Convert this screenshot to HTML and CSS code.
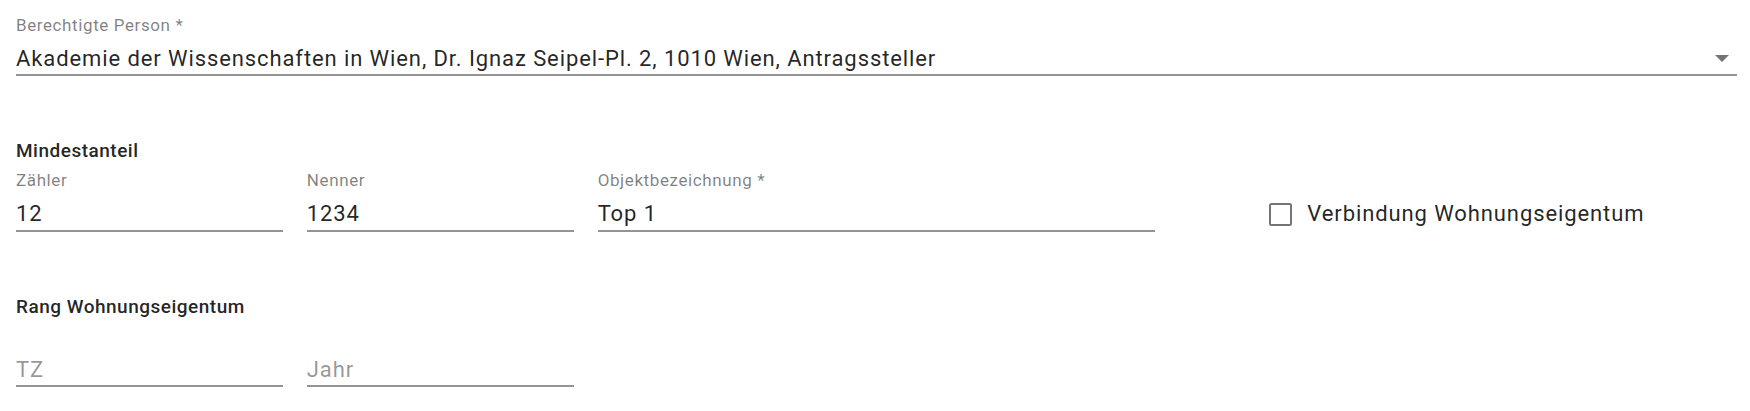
FILE: index.html
```html
<!DOCTYPE html>
<html lang="de">
<head>
<meta charset="utf-8">
<title>Formular</title>
<link rel="stylesheet" href="styles.css">
</head>
<body>
<form class="form">
  <div class="select-field">
    <div class="label">Berechtigte Person *</div>
    <div class="select-value">
      <span class="value-text">Akademie der Wissenschaften in Wien, Dr. Ignaz Seipel-Pl. 2, 1010 Wien, Antragssteller</span>
      <span class="arrow"></span>
    </div>
  </div>

  <h3 class="section-title first">Mindestanteil</h3>
  <div class="row">
    <div class="field">
      <div class="label">Zähler</div>
      <div class="input">12</div>
    </div>
    <div class="field">
      <div class="label">Nenner</div>
      <div class="input">1234</div>
    </div>
    <div class="field span2">
      <div class="label">Objektbezeichnung *</div>
      <div class="input">Top 1</div>
    </div>
    <div class="check-cell span2">
      <label class="checkbox">
        <span class="box"></span>
        <span class="check-text">Verbindung Wohnungseigentum</span>
      </label>
    </div>
  </div>

  <h3 class="section-title">Rang Wohnungseigentum</h3>
  <div class="row">
    <div class="field">
      <div class="label"></div>
      <div class="input placeholder">TZ</div>
    </div>
    <div class="field">
      <div class="label"></div>
      <div class="input placeholder">Jahr</div>
    </div>
  </div>
</form>
</body>
</html>
```

FILE: styles.css
```css
html, body {
  margin: 0;
  padding: 0;
  background: #ffffff;
}

body {
  font-family: Roboto, "Liberation Sans", Arial, sans-serif;
  color: rgba(0, 0, 0, 0.87);
}

.form {
  padding: 16px 13px 0 16px;
}

.label {
  font-size: 17px;
  line-height: 18px;
  height: 18px;
  letter-spacing: 0.6px;
  color: rgba(0, 0, 0, 0.5);
  margin-bottom: 13px;
  white-space: nowrap;
}

.select-value {
  display: flex;
  align-items: center;
  justify-content: space-between;
  font-size: 22px;
  line-height: 24px;
  letter-spacing: 0.9px;
  padding-bottom: 3px;
  border-bottom: 2px solid #949494;
}

.arrow {
  width: 0;
  height: 0;
  border-left: 7px solid transparent;
  border-right: 7px solid transparent;
  border-top: 7px solid #757575;
  margin-right: 8px;
  margin-top: -1px;
}

.section-title {
  margin: 0;
  font-size: 19px;
  line-height: 21px;
  letter-spacing: 0.5px;
  font-weight: 500;
  color: rgba(0, 0, 0, 0.87);
  margin-top: 64px;
  margin-bottom: 10px;
}

.row {
  display: grid;
  grid-template-columns: repeat(6, 1fr);
  column-gap: 24px;
}

.span2 {
  grid-column: span 2;
}

.input {
  font-size: 22px;
  line-height: 24px;
  letter-spacing: 0.9px;
  padding-bottom: 3.5px;
  border-bottom: 2px solid #949494;
  white-space: nowrap;
}

.input.placeholder {
  color: rgba(0, 0, 0, 0.42);
}

.check-cell {
  align-self: end;
  padding-left: 90px;
  padding-bottom: 5.5px;
}

.checkbox {
  display: flex;
  align-items: center;
  gap: 15px;
}

.box {
  box-sizing: border-box;
  width: 23px;
  height: 23px;
  border: 2.5px solid #757575;
  border-radius: 2.5px;
  flex: none;
}

.check-text {
  font-size: 22px;
  line-height: 24px;
  letter-spacing: 0.9px;
}
```
